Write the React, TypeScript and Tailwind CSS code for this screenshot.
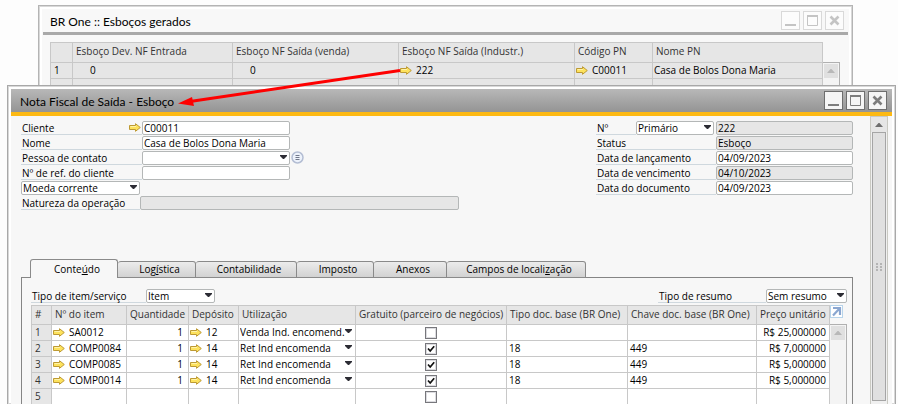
import type { ReactNode } from "react";

const formRow = "flex h-[15px] items-start";
const fieldBox =
  "block h-[14px] w-full rounded-[2px] border border-[#b4b7b7] px-px text-[10px] leading-[12px] text-black outline-none";

function LinkArrow() {
  return (
    <svg width="12" height="9" viewBox="0 0 12 9" className="shrink-0" aria-hidden="true">
      <path d="M.5 2.500H6.500V.7L11.300 4.500L6.500 8.300V6.500H.5Z" fill="#fde25c" stroke="#bd9a34" />
      <path d="M1.500 3.500H7" stroke="#fff3a8" />
    </svg>
  );
}

function Caret() {
  return (
    <svg width="7" height="4" viewBox="0 0 7 4" className="pointer-events-none absolute right-[3px] top-[4px]" aria-hidden="true">
      <path d="M0 0H7V1L4 4H3L0 1Z" fill="#2c2c34" />
    </svg>
  );
}

function Choice({ id, value, className }: { id: string; value: string; className: string }) {
  return (
    <div className={`relative ${className}`}>
      <select id={id} aria-label={value || "Pessoa de contato"} className={`${fieldBox} appearance-none bg-white`} defaultValue={value}>
        <option value={value}>{value}</option>
      </select>
      <Caret />
    </div>
  );
}

function Label({ id, text, className }: { id: string; text: string; className: string }) {
  return (
    <label htmlFor={id} className={`h-[14px] whitespace-nowrap border-b border-[#cfd8de] pl-px leading-[14px] ${className}`}>
      {text}
    </label>
  );
}

function WindowButtons({ active }: { active: boolean }) {
  const box = active
    ? "flex size-[19px] items-center justify-center border border-[#6e6e6e] bg-[#f5f5f5] text-[#7d7d7d]"
    : "flex size-[19px] items-center justify-center border border-[#d9d9d9] bg-[#fcfcfc] text-[#c4c4c4]";
  const icon = "size-[17px]";
  return (
    <div className="flex gap-[3px]">
      <button type="button" aria-label="Minimizar" className={box}>
        <svg viewBox="0 0 17 17" className={icon}><path d="M3 13H14" stroke="currentColor" strokeWidth="2" /></svg>
      </button>
      <button type="button" aria-label="Maximizar" className={box}>
        <svg viewBox="0 0 17 17" className={icon}>
          <path d="M3.500 3.500H13.500V13.500H3.500Z" fill="none" stroke="currentColor" />
          <path d="M3 4H14" stroke="currentColor" strokeWidth="2" />
        </svg>
      </button>
      <button type="button" aria-label="Fechar" className={box}>
        <svg viewBox="0 0 17 17" className={icon}>
          <path d="M4.500 4.500L12.500 12.500M12.500 4.500L4.500 12.500" stroke="currentColor" strokeWidth="2.600" />
        </svg>
      </button>
    </div>
  );
}

function ScrollUp() {
  return (
    <button type="button" aria-label="Rolar para cima" className="flex h-[14px] w-full items-center justify-center bg-[#e0e0e0]">
      <svg width="8" height="4" viewBox="0 0 8 4"><path d="M0 4L3.500 0H4.500L8 4Z" fill="#b8b8b8" /></svg>
    </button>
  );
}

const draftHead = ["", "Esboço Dev. NF Entrada", "Esboço NF Saída (venda)", "Esboço NF Saída (Industr.)", "Código PN", "Nome PN"];

function DraftsWindow() {
  const cell = "border-l border-t border-[#c8c8c8] p-0";
  return (
    <section className="absolute left-[38px] right-[45px] top-[5px] h-[120px] border border-[#b4b4b4] bg-white p-[3px] shadow-[inset_0_0_0_1px_#d8d8d8]">
      <div className="h-full bg-[#f8f8f8]">
        <header className="mx-px flex h-[26px] items-start justify-between border-b-[3px] border-[#a9a9a9] pl-[7px] pr-[4px] pt-[2px]">
          <h2 className="font-['Lato','Open_Sans',sans-serif] text-[12px] leading-[22px]">BR One :: Esboços gerados</h2>
          <WindowButtons active={false} />
        </header>
        <div className="flex pl-[8px] pr-[9px] pt-[7px]">
          <table className="min-w-0 flex-1 table-fixed border-separate border-spacing-0 border-r border-[#c8c8c8] bg-[#e6e6e6]">
            <colgroup>
              <col className="w-[22px]" />
              <col className="w-[160px]" />
              <col className="w-[166px]" />
              <col className="w-[176px]" />
              <col className="w-[78px]" />
              <col />
            </colgroup>
            <thead>
              <tr className="h-[20px]">
                {draftHead.map((h, i) => (
                  <th key={i} className={`${cell} whitespace-nowrap pb-[3px] pl-[3px] text-left font-normal leading-[16px] text-[#333]`}>{h}</th>
                ))}
              </tr>
            </thead>
            <tbody>
              <tr className="h-[16px]">
                <td className={`${cell} pl-[3px]`}>1</td>
                <td className={`${cell} pl-[17px]`}>0</td>
                <td className={`${cell} pl-[17px]`}>0</td>
                <td className={`${cell} pl-px`}><span className="flex items-center gap-[4px]"><LinkArrow />222</span></td>
                <td className={`${cell} pl-px`}><span className="flex items-center gap-[4px]"><LinkArrow />C00011</span></td>
                <td className={`${cell} whitespace-nowrap pl-px`}>Casa de Bolos Dona Maria</td>
              </tr>
              <tr className="h-[16px]">
                {draftHead.map((_, i) => <td key={i} className={cell} />)}
              </tr>
            </tbody>
          </table>
          <div className="mt-[20px] w-[17px] border-r border-t border-[#b0b0b0] bg-[#f4f4f4] p-px"><ScrollUp /></div>
        </div>
      </div>
    </section>
  );
}

const rightFields = [
  { id: "status", label: "Status", value: "Esboço", locked: true },
  { id: "lancamento", label: "Data de lançamento", value: "04/09/2023", locked: false },
  { id: "vencimento", label: "Data de vencimento", value: "04/10/2023", locked: true },
  { id: "documento", label: "Data do documento", value: "04/09/2023", locked: false },
];

function HeaderForm() {
  return (
    <div className="flex items-start justify-between">
      <div className="w-[438px]">
        <div className={formRow}>
          <Label id="cliente" text="Cliente" className="w-[108px]" />
          <span className="flex h-[14px] w-[13px] items-center border-b border-[#cfd8de]"><LinkArrow /></span>
          <input id="cliente" defaultValue="C00011" className={`${fieldBox} max-w-[148px] bg-white`} />
        </div>
        <div className={formRow}>
          <Label id="nome" text="Nome" className="w-[121px]" />
          <input id="nome" defaultValue="Casa de Bolos Dona Maria" className={`${fieldBox} max-w-[148px] bg-white`} />
        </div>
        <div className={formRow}>
          <Label id="contato" text="Pessoa de contato" className="w-[121px]" />
          <Choice id="contato" value="" className="w-[148px]" />
          <button type="button" aria-label="Detalhes do contato" className="ml-px">
            <svg width="13" height="13" viewBox="0 0 13 13">
              <circle cx="6.500" cy="6.500" r="5.500" fill="#edf2fb" stroke="#b3bdd3" strokeWidth="1.500" />
              <path d="M4.500 4.500H8.500M4.500 6.500H8.500M4.500 8.500H8.500" stroke="#71788a" />
            </svg>
          </button>
        </div>
        <div className={formRow}>
          <Label id="ref" text="Nº de ref. do cliente" className="w-[121px]" />
          <input id="ref" className={`${fieldBox} max-w-[148px] bg-white`} />
        </div>
        <div className={formRow}>
          <Choice id="moeda" value="Moeda corrente" className="w-[119px]" />
        </div>
        <div className={formRow}>
          <Label id="natureza" text="Natureza da operação" className="w-[119px]" />
          <input id="natureza" readOnly className={`${fieldBox} flex-1 bg-[#e6e6e6]`} />
        </div>
      </div>
      <div className="w-[257px]">
        <div className={formRow}>
          <Label id="numero" text="Nº" className="w-[40px]" />
          <Choice id="serie" value="Primário" className="w-[78px]" />
          <input id="numero" readOnly value="222" className={`${fieldBox} ml-[2px] flex-1 bg-[#e6e6e6]`} />
        </div>
        {rightFields.map((f) => (
          <div key={f.id} className={formRow}>
            <Label id={f.id} text={f.label} className="w-[120px]" />
            <input id={f.id} readOnly={f.locked} defaultValue={f.value} className={`${fieldBox} flex-1 ${f.locked ? "bg-[#e6e6e6]" : "bg-white"}`} />
          </div>
        ))}
      </div>
    </div>
  );
}

const tabs: { label: ReactNode; width: string }[] = [
  { label: <>Conte<u>ú</u>do</>, width: "w-[88px]" },
  { label: <>Log<u>í</u>stica</>, width: "w-[78px]" },
  { label: "Contabilidade", width: "w-[101px]" },
  { label: "Imposto", width: "w-[77px]" },
  { label: "Anexos", width: "w-[73px]" },
  { label: <>Campos de locali<u>z</u>ação</>, width: "w-[139px]" },
];

const itemHead = ["#", "Nº do item", "Quantidade", "Depósito", "Utilização", "Gratuito (parceiro de negócios)", "Tipo doc. base (BR One)", "Chave doc. base (BR One)", "Preço unitário"];

const items = [
  { item: "SA0012", qty: "1", depot: "12", use: "Venda Ind. encomend.", free: false, type: "", key: "", price: "R$ 25,000000" },
  { item: "COMP0084", qty: "1", depot: "14", use: "Ret Ind encomenda", free: true, type: "18", key: "449", price: "R$ 7,000000" },
  { item: "COMP0085", qty: "1", depot: "14", use: "Ret Ind encomenda", free: true, type: "18", key: "449", price: "R$ 5,000000" },
  { item: "COMP0014", qty: "1", depot: "14", use: "Ret Ind encomenda", free: true, type: "18", key: "449", price: "R$ 5,000000" },
  { item: "", qty: "", depot: "", use: "", free: false, type: "", key: "", price: "" },
];

function ItemsTable() {
  const cell = "h-[16px] whitespace-nowrap border-l border-t border-[#c8c8c8] p-0 leading-[15px]";
  return (
    <table className="min-w-0 flex-1 table-fixed border-separate border-spacing-0 border-r border-[#c8c8c8] bg-white">
      <colgroup>
        <col className="w-[20px]" />
        <col className="w-[75px]" />
        <col className="w-[62px]" />
        <col className="w-[50px]" />
        <col className="w-[117px]" />
        <col className="w-[151px]" />
        <col className="w-[121px]" />
        <col />
        <col className="w-[73px]" />
      </colgroup>
      <thead>
        <tr className="h-[19px] bg-[#e6e6e6] text-[#333]">
          {itemHead.map((h) => (
            <th key={h} className="whitespace-nowrap border-l border-t border-[#c8c8c8] p-0 pb-[2px] pl-[3px] text-left font-normal leading-[16px]">{h}</th>
          ))}
        </tr>
      </thead>
      <tbody>
        {items.map((r, i) => (
          <tr key={i}>
            <td className={`${cell} bg-[#e6e6e6] pl-[3px] text-[#333]`}>{i + 1}</td>
            <td className={`${cell} pl-px`}>
              {r.item && <span className="flex items-center gap-[4px]"><LinkArrow />{r.item}</span>}
            </td>
            <td className={`${cell} pr-[5px] text-right`}>{r.qty}</td>
            <td className={`${cell} pl-px`}>
              {r.depot && <span className="flex items-center gap-[4px]"><LinkArrow />{r.depot}</span>}
            </td>
            <td className={cell}>
              {r.use && (
                <div className="relative">
                  <select aria-label={`Utilização ${i + 1}`} className="block h-[15px] w-full appearance-none bg-white pl-px pr-[10px] text-[10px] leading-[15px] outline-none">
                    <option>{r.use}</option>
                  </select>
                  <Caret />
                </div>
              )}
            </td>
            <td className={cell}>
              <span className="relative mx-auto block size-[12px]">
                <input type="checkbox" aria-label={`Gratuito ${i + 1}`} defaultChecked={r.free} className="peer block size-[12px] appearance-none border border-[#77777c] bg-white shadow-[inset_0_0_0_1px_#dcdce0]" />
                <svg viewBox="0 0 12 12" className="pointer-events-none absolute inset-0 hidden size-[12px] peer-checked:block" aria-hidden="true">
                  <path d="M3 5.500L5.200 8L9.200 3.200" fill="none" stroke="#111" strokeWidth="1.700" />
                </svg>
              </span>
            </td>
            <td className={`${cell} pl-[2px]`}>{r.type}</td>
            <td className={`${cell} pl-[2px]`}>{r.key}</td>
            <td className={`${cell} pr-[3px] text-right`}>{r.price}</td>
          </tr>
        ))}
      </tbody>
    </table>
  );
}

function InvoiceWindow() {
  return (
    <section className="relative ml-[7px] mr-[2px] mt-[85px] border border-[#a8a8a8] bg-white px-[3px] pt-[3px] shadow-[inset_0_0_0_1px_#d8d8d8]">
      <header className="flex h-[27px] items-start justify-between border-b-4 border-[#fdb913] bg-linear-to-b from-[#b8b8b8] to-[#8e8e8e] bg-origin-border pl-[9px] pr-[5px] pt-[2px]">
        <h1 className="font-['Lato','Open_Sans',sans-serif] text-[12px] leading-[22px]">Nota Fiscal de Saída - Esboço</h1>
        <WindowButtons active />
      </header>
      <div className="flex bg-[#f7f7f7]">
        <main className="min-w-0 flex-1 pl-[10px] pr-[17px] pt-[5px]">
          <HeaderForm />
          <div className="mt-[48px]">
            <div role="tablist" className="relative z-10 -mb-px flex h-[19px] items-end pl-[9px]">
              {tabs.map((t, i) => (
                <button
                  key={i}
                  type="button"
                  role="tab"
                  aria-selected={i === 0}
                  className={`${t.width} whitespace-nowrap rounded-t-[3px] border-t border-r border-[#8a8a8a] pl-[6px] ${
                    i === 0
                      ? "h-[19px] border-l bg-[#f7f7f7]"
                      : "h-[17px] border-b bg-linear-to-b from-[#ececec] to-[#d2d2d2]"
                  }`}
                >
                  {t.label}
                </button>
              ))}
            </div>
            <div role="tabpanel" className="border-x border-t border-[#858585] pl-[9px] pr-[5px] pt-[11px]">
              <div className="flex h-[16px] justify-between">
                <div className="flex">
                  <Label id="tipo" text="Tipo de item/serviço" className="w-[115px]" />
                  <Choice id="tipo" value="Item" className="w-[69px]" />
                </div>
                <div className="flex">
                  <Label id="resumo" text="Tipo de resumo" className="w-[108px]" />
                  <Choice id="resumo" value="Sem resumo" className="w-[81px]" />
                </div>
              </div>
              <div className="flex items-stretch">
                <ItemsTable />
                <div className="flex w-[17px] flex-col">
                  <button type="button" aria-label="Expandir tabela" className="mb-[6px] size-[13px] border border-[#b8d4ea] bg-white">
                    <svg viewBox="0 0 11 11" className="size-[11px]">
                      <path d="M2 2H9V9M9 2L2 9.500" fill="none" stroke="#8aa6d0" strokeWidth="2.200" />
                    </svg>
                  </button>
                  <div className="flex-1 border-r border-t border-[#b0b0b0] bg-[#f4f4f4] p-px"><ScrollUp /></div>
                </div>
              </div>
            </div>
          </div>
        </main>
        <div className="mr-[4px] flex w-[18px] flex-col border-x border-t border-[#c9c9c2] bg-[#f0f0f0] pb-[3px]">
          <button type="button" aria-label="Rolar para cima" className="flex h-[15px] items-center justify-center bg-[#e6e6e6]">
            <svg width="8" height="4" viewBox="0 0 8 4"><path d="M0 4L3.500 0H4.500L8 4Z" fill="#6e6e6e" /></svg>
          </button>
          <div className="mx-px flex flex-1 items-center justify-center border border-[#a5a5a5] bg-[#e0e0e0]">
            <svg width="6" height="8" viewBox="0 0 6 8">
              <path d="M0 1H2M4 1H6M0 4H2M4 4H6M0 7H2M4 7H6" stroke="#b4b4b4" strokeWidth="2" />
            </svg>
          </div>
        </div>
      </div>
    </section>
  );
}

export default function App() {
  return (
    <div className="relative flow-root h-screen overflow-hidden bg-[#fdfdfd] font-['Open_Sans','Noto_Sans',sans-serif] text-[10px] leading-[15px] text-black">
      <DraftsWindow />
      <InvoiceWindow />
      <svg width="224" height="44" viewBox="0 0 224 44" className="pointer-events-none absolute left-[178px] top-[66px]" aria-hidden="true">
        <path d="M222 4.500L12 35.500" stroke="#fe0000" strokeWidth="3" />
        <path d="M0 37.500L14 31L16 40Z" fill="#fe0000" />
      </svg>
    </div>
  );
}
